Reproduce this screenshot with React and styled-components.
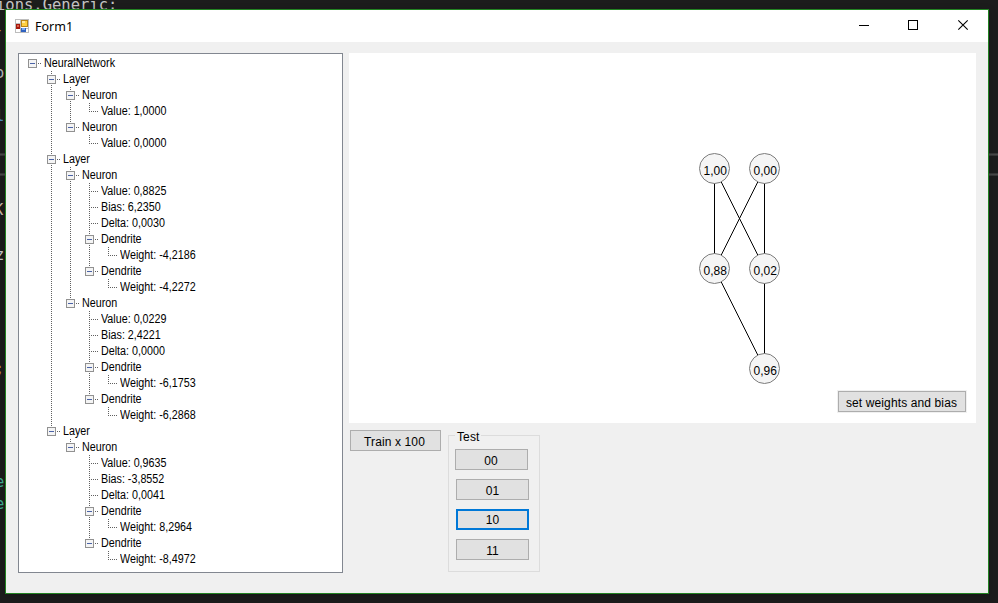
import React from "react";
import styled, { createGlobalStyle } from "styled-components";

const GlobalStyle = createGlobalStyle`
  * { box-sizing: border-box; }
  body { margin: 0; overflow: hidden; background: #1e1e1e; }
`;

const Desktop = styled.div`
  position: relative;
  width: 998px;
  height: 603px;
  overflow: hidden;
  background: #1c1c1c;
  padding: 9px 9px 9px 5px;
`;

const EditorText = styled.span`
  position: absolute;
  left: ${(p) => p.$x}px;
  top: ${(p) => p.$y}px;
  font: 15.5px/18px "DejaVu Sans Mono", monospace;
  color: ${(p) => p.$color};
  white-space: pre;
`;

const EditorRule = styled.div`
  position: absolute;
  left: 0;
  top: ${(p) => p.$y}px;
  width: 998px;
  height: 3px;
  background: #484848;
  border: solid #363636;
  border-width: 1px 0;
`;

const Window = styled.div`
  position: relative;
  width: 984px;
  height: 585px;
  border: 1px solid #228322;
  background: #f0f0f0;
  box-shadow: 0 2px 8px rgba(0, 0, 0, 0.2);
  font-family: "Liberation Sans", Arial, sans-serif;
  color: #000;
`;

const TitleBar = styled.header`
  display: flex;
  align-items: center;
  height: 32px;
  padding-left: 9px;
  background: #fff;
`;

const Title = styled.span`
  flex: 1;
  padding: 1px 0 0 5px;
  font: 12.5px/18px "Noto Sans", "Open Sans", sans-serif;
`;

const Caption = styled.svg`
  display: block;
  width: 50px;
  height: 32px;
  shape-rendering: ${(p) => (p.$smooth ? "auto" : "crispEdges")};
  fill: none;
  stroke: #000;
`;

const Client = styled.main`
  display: flex;
  gap: 6px;
  padding: 11px 12px 0;
`;

const Tree = styled.div`
  width: 325px;
  height: 520px;
  padding: 1px 0 0 4px;
  border: 1px solid #828790;
  background: #fff;
`;

const TreeRow = styled.div`
  display: flex;
  height: 16px;
`;

const Guide = styled.svg`
  display: block;
  flex: none;
  width: 19px;
  height: 16px;
  shape-rendering: crispEdges;
`;

const TreeLabel = styled.span`
  padding-left: 2px;
  font-size: 12px;
  line-height: 16px;
  white-space: pre;
  transform: scaleX(0.895);
  transform-origin: 2px 0;
`;

const Side = styled.div`
  display: flex;
  flex-direction: column;
  width: 627px;
`;

const Canvas = styled.section`
  display: flex;
  align-items: flex-end;
  justify-content: flex-end;
  position: relative;
  height: 370px;
  padding: 0 9px 10px 0;
  background: #fff;
`;

const Graph = styled.svg`
  position: absolute;
  inset: 0;
  width: 627px;
  height: 370px;
  font: 12px "Liberation Sans", Arial, sans-serif;
`;

const ButtonFrame = styled.div`
  position: relative;
  padding: 1px;
  background: #f0f0f0;
`;

const Button = styled.button`
  display: block;
  width: ${(p) => p.$w}px;
  height: 21px;
  margin: 0 0 0 ${(p) => p.$indent || 0}px;
  padding: ${(p) => (p.$focused ? 2 : 3)}px ${(p) => p.$inset || 0}px 0 0;
  border: ${(p) => (p.$focused ? "2px solid #0078d7" : "1px solid #adadad")};
  background: #e1e1e1;
  color: #000;
  font: 12px/15px "Liberation Sans", Arial, sans-serif;
  letter-spacing: 0.12px;
  text-align: center;
  white-space: nowrap;
`;

const Controls = styled.div`
  display: flex;
  align-items: flex-start;
  gap: 7px;
  padding: 7px 0 0 1px;
`;

const Group = styled.fieldset`
  display: flex;
  flex-direction: column;
  gap: 9px;
  width: 92px;
  height: 143px;
  min-width: 0;
  margin: -1px 0 0;
  padding: 8px 0 0 6px;
  border: 1px solid #dcdcdc;
`;

const Legend = styled.legend`
  height: 12px;
  padding: 0 1px 0 2px;
  margin-left: 0;
  font-size: 12px;
  line-height: 17px;
  letter-spacing: 0.12px;
`;

const nodes = [
  [0, "NeuralNetwork"],
  [1, "Layer"],
  [2, "Neuron"], [3, "Value: 1,0000"],
  [2, "Neuron"], [3, "Value: 0,0000"],
  [1, "Layer"],
  [2, "Neuron"], [3, "Value: 0,8825"], [3, "Bias: 6,2350"], [3, "Delta: 0,0030"],
  [3, "Dendrite"], [4, "Weight: -4,2186"],
  [3, "Dendrite"], [4, "Weight: -4,2272"],
  [2, "Neuron"], [3, "Value: 0,0229"], [3, "Bias: 2,4221"], [3, "Delta: 0,0000"],
  [3, "Dendrite"], [4, "Weight: -6,1753"],
  [3, "Dendrite"], [4, "Weight: -6,2868"],
  [1, "Layer"],
  [2, "Neuron"], [3, "Value: 0,9635"], [3, "Bias: -3,8552"], [3, "Delta: 0,0041"],
  [3, "Dendrite"], [4, "Weight: 8,2964"],
  [3, "Dendrite"], [4, "Weight: -8,4972"],
];

function hasNextSibling(index, level) {
  for (let i = index + 1; i < nodes.length; i++) {
    if (nodes[i][0] < level) return false;
    if (nodes[i][0] === level) return true;
  }
  return false;
}

function GuideCell({ index, level }) {
  const own = nodes[index][0] === level;
  const open = own && nodes[index + 1] && nodes[index + 1][0] > level;
  const next = hasNextSibling(index, level);
  const line = { stroke: "#606060", strokeDasharray: "1 1" };
  return (
    <Guide viewBox="0 0 19 16">
      {(own ? level > 0 : next) && (
        <path d={`M9.5 0V${next ? 16 : 9}`} {...line} />
      )}
      {own && <path d="M9 8.5H18" {...line} />}
      {open && (
        <>
          <rect x="5.5" y="4.5" width="8" height="8" fill="#f4f4f4" stroke="#919191" />
          <path d="M7 8.5h5" stroke="#4b63a7" />
        </>
      )}
    </Guide>
  );
}

function FormIcon() {
  return (
    <svg width="15" height="15" viewBox="0 0 15 15" shapeRendering="crispEdges">
      <path d="M.5 .5h13v13h-13zM.5 4.5h5M5.5 .5v13M.5 9.5h13" fill="#fff" stroke="#bdbdbd" />
      <rect x="6" y="1" width="7" height="7" fill="#b98516" />
      <rect x="7" y="2" width="5" height="5" fill="#ffd040" />
      <rect x="7" y="2" width="3" height="2" fill="#ffe9a0" />
      <rect x="1" y="5" width="4" height="5" fill="#a5190e" />
      <rect x="2" y="6" width="2" height="2" fill="#e0604c" />
      <rect x="6" y="9" width="5" height="4" fill="#2f62c0" />
      <rect x="7" y="9" width="3" height="2" fill="#79a9f0" />
    </svg>
  );
}

const circles = [
  [365.5, 115.5, "1,00"], [415.5, 115.5, "0,00"],
  [365.5, 215.5, "0,88"], [415.5, 215.5, "0,02"],
  [415.5, 315.5, "0,96"],
];

const editorTexts = [
  [-4, -4, "#c4c4c4", "ions.Generic:"],
  [-6, 21, "#b98a4a", "-"],
  [-5, 64, "#b8b8b8", "o"],
  [-5, 107, "#4a8fc0", "l"],
  [-6, 201, "#c8b8a8", "K"],
  [-5, 246, "#c8c8c8", "z"],
  [-5, 360, "#b98a4a", ";"],
  [-5, 473, "#3fae92", "e"],
  [-5, 495, "#3fae92", "e"],
];

export default function App() {
  return (
    <Desktop>
      <GlobalStyle />
      {editorTexts.map(([x, y, color, text]) => (
        <EditorText key={y} $x={x} $y={y} $color={color}>{text}</EditorText>
      ))}
      <EditorRule $y={153} />
      <EditorRule $y={173} />
      <Window>
        <TitleBar>
          <FormIcon />
          <Title>Form1</Title>
          <Caption viewBox="0 0 50 32"><path d="M21 15.5h10" /></Caption>
          <Caption viewBox="0 0 50 32"><rect x="20.5" y="10.5" width="9" height="9" /></Caption>
          <Caption viewBox="0 0 50 32" $smooth><path d="M20.3 10.3l9.4 9.4m0-9.4l-9.4 9.4" strokeWidth="1.1" /></Caption>
        </TitleBar>
        <Client>
          <Tree>
            {nodes.map(([level, text], i) => (
              <TreeRow key={i}>
                {Array.from({ length: level + 1 }, (_, l) => (
                  <GuideCell key={l} index={i} level={l} />
                ))}
                <TreeLabel>{text}</TreeLabel>
              </TreeRow>
            ))}
          </Tree>
          <Side>
            <Canvas>
              <Graph viewBox="0 0 627 370">
                <path
                  d="M365.5 115.5v100M415.5 115.5v200"
                  stroke="#000"
                  shapeRendering="crispEdges"
                />
                <path
                  d="M365.5 115.5l50 100M415.5 115.5l-50 100M365.5 215.5l50 100"
                  stroke="#000"
                />
                {circles.map(([x, y, text]) => (
                  <g key={text}>
                    <circle cx={x} cy={y} r="15" fill="#f5f5f5" stroke="#7c7c7c" />
                    <text x={x - 11} y={y + 6.5}>{text}</text>
                  </g>
                ))}
              </Graph>
              <ButtonFrame><Button $w={128} $inset={1}>set weights and bias</Button></ButtonFrame>
            </Canvas>
            <Controls>
              <Button $w={91} $inset={2}>Train x 100</Button>
              <Group>
                <Legend>Test</Legend>
                <Button $w={73} $inset={1}>00</Button>
                <Button $w={73} $indent={1}>01</Button>
                <Button $w={73} $indent={1} $focused>10</Button>
                <Button $w={73} $indent={1}>11</Button>
              </Group>
            </Controls>
          </Side>
        </Client>
      </Window>
    </Desktop>
  );
}
